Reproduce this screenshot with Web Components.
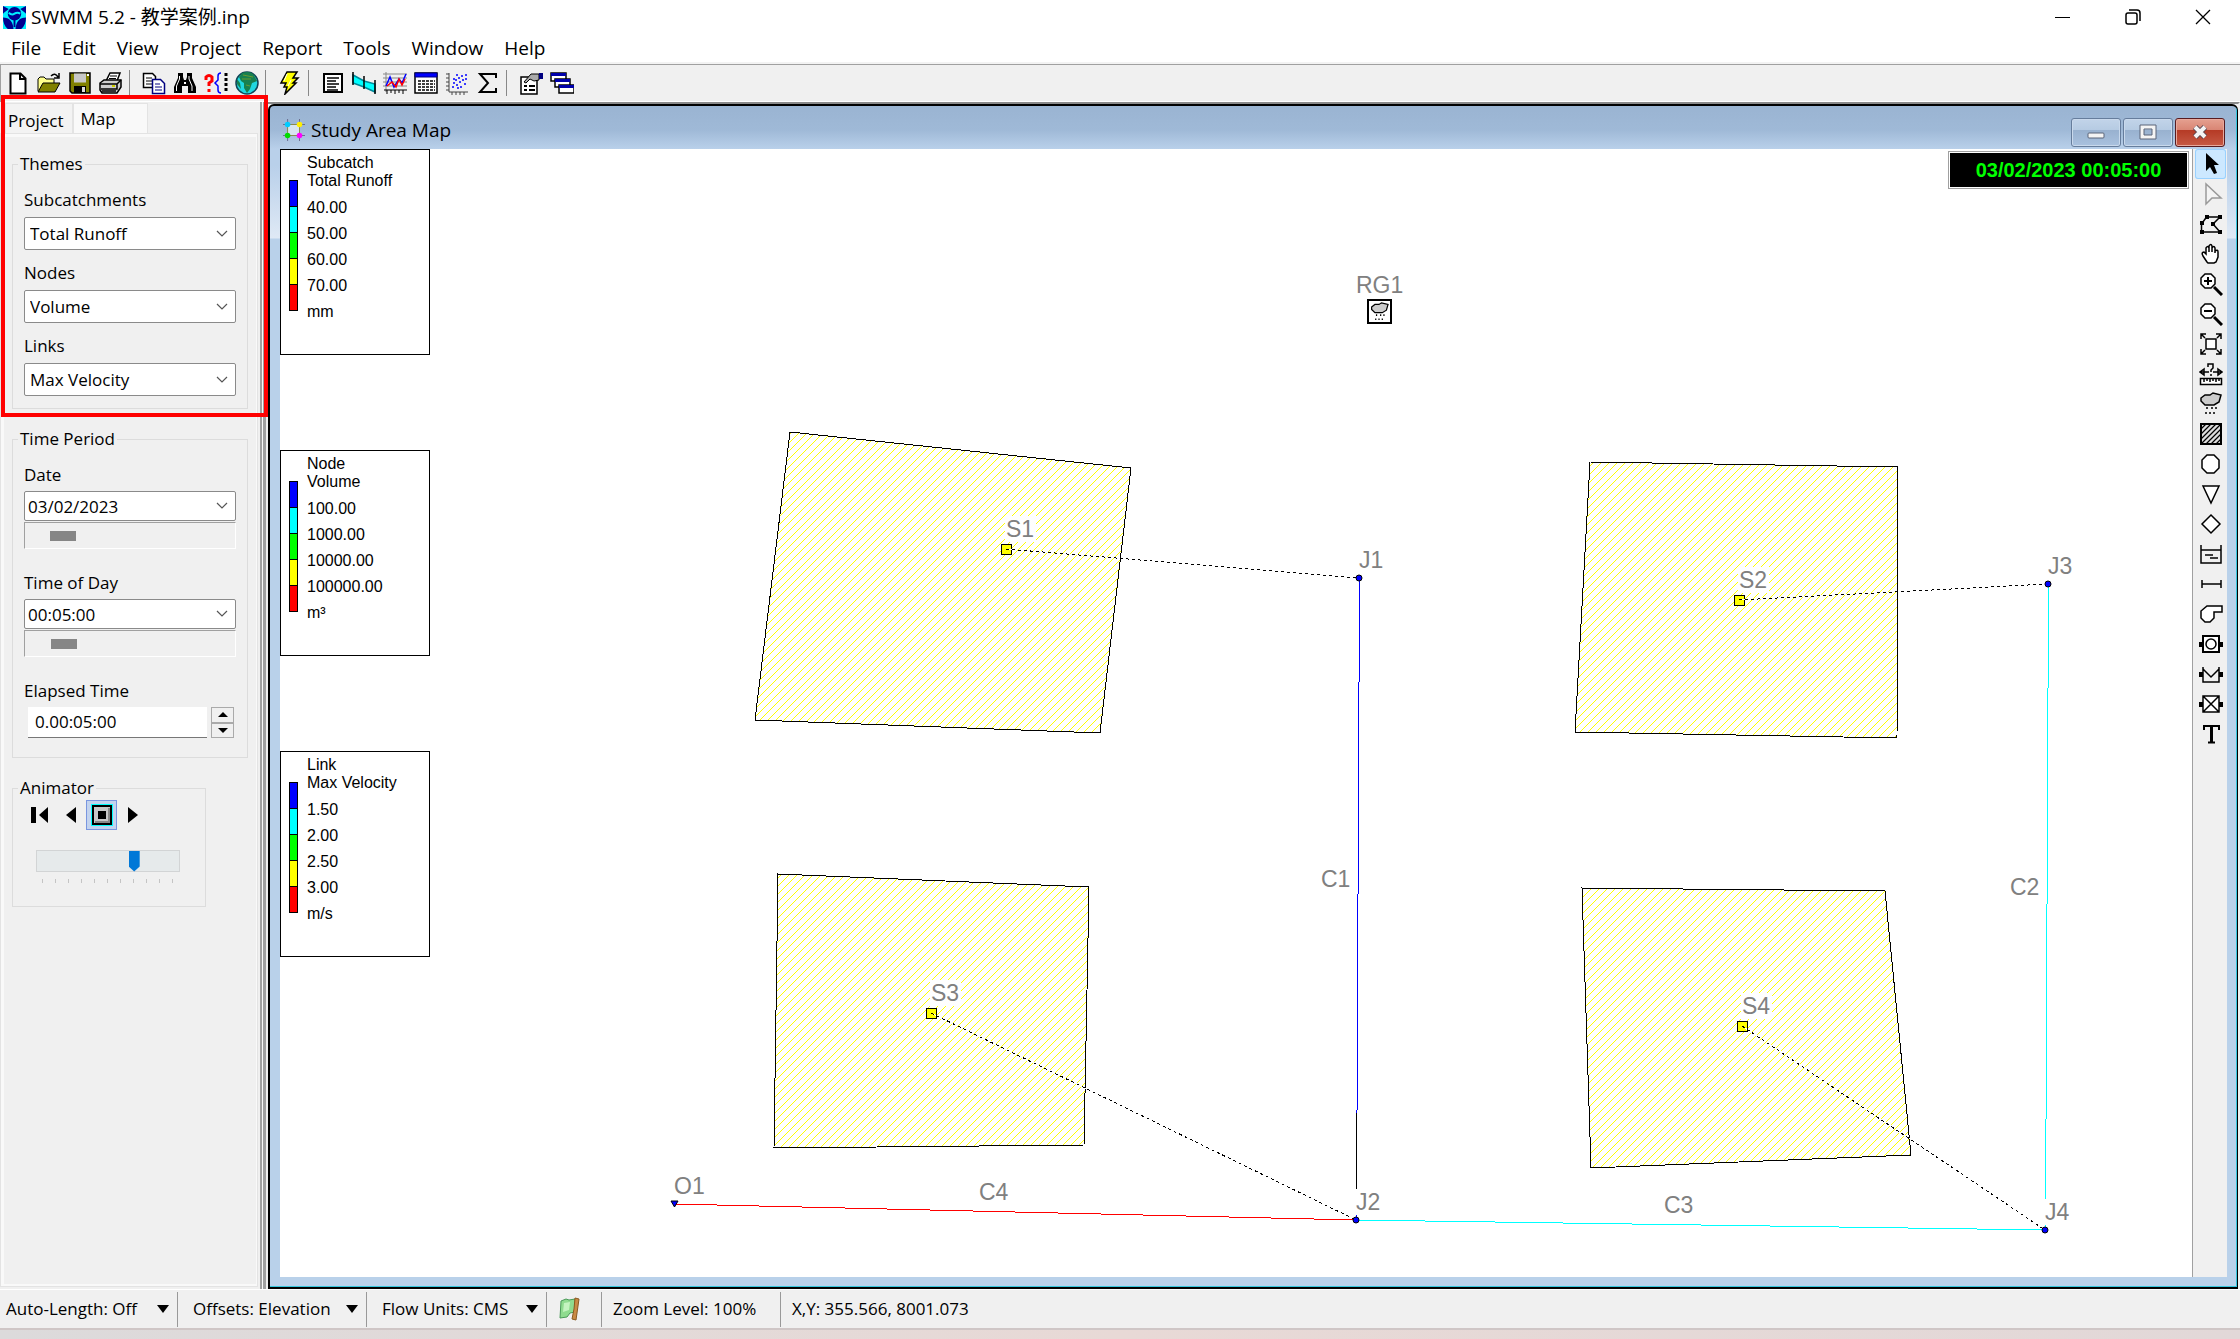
<!DOCTYPE html>
<html lang="en">
<head>
<meta charset="utf-8">
<title>SWMM 5.2 - 教学案例.inp</title>
<style>
  html, body { margin: 0; height: 100%; }
  body { font: 17px/24px "Open Sans", "Noto Sans CJK SC", sans-serif; color: #000; background: #f0f0f0; overflow: hidden; }
</style>
</head>
<body>
<swmm-app></swmm-app>
<script>
const ICONS = {
  new: '<path d="M4.500 2.500h10l5 5v15h-15zM14 3v5h5" fill="#fff" stroke="#000" stroke-width="2"/>',
  open: '<path d="M14 5q4-4 7 1M22 2v5h-5" fill="none" stroke="#000" stroke-width="1.500"/><path d="M1 20V8l2-2h4l2 2h8v4" fill="#ffff8c" stroke="#000"/><path d="M1 21l5-9h17l-5 9z" fill="#808000" stroke="#000"/>',
  save: '<path d="M2 2h20v20H4l-2-2z" fill="#808000" stroke="#000" stroke-width="1.500"/><path d="M6 2.500h12v9H6z" fill="#c8c8c8"/><path d="M6 15h12v7H6z" fill="#000"/><path d="M14 16h3v5h-3z" fill="#ddd"/><path d="M19 3h2v2h-2z" fill="#fff"/>',
  print: '<path d="M7 10L11 2h10l-3 8" fill="#fff" stroke="#000" stroke-width="1.500"/><path d="M11 5h7M10 7.500h7" stroke="#000"/><path d="M1 12l4-3h17v7l-4 6H3l-2-3z" fill="#ccc" stroke="#000" stroke-width="1.500"/><path d="M1 13h17v5H2M18 13l4-4M3 20h14" fill="none" stroke="#000" stroke-width="1.500"/><path d="M13 15h3" stroke="#cc0" stroke-width="2"/>',
  copy: '<path d="M1.500 2.500h9l3 3v11h-12z" fill="#fff" stroke="#000" stroke-width="1.500"/><path d="M4 7h6M4 10h6M4 13h6" stroke="#000"/><path d="M10.500 8.500h8l4 4v10h-12z" fill="#fff" stroke="#000080" stroke-width="1.500"/><path d="M13 13h5M13 16h7M13 19h7" stroke="#000080"/>',
  find: '<path d="M5 2h5v4l1 3h2l1-3V2h5v5l4 9v6h-8v-7h-6v7H1v-6l4-9z" fill="#000"/><path d="M6.500 5v3l-3 7v5M16 5v3l3 7v5" fill="none" stroke="#fff"/><path d="M11 11h2v2h-2z" fill="#fff"/>',
  query: '<path d="M2 9V6q3-3 6 0v4l-3 2v3M5 18v3" fill="none" stroke="#f00" stroke-width="3"/><path d="M17 2q-3 0-3 3v4l-3 3 3 3v4q0 3 3 3" fill="none" stroke="#00f" stroke-width="1.500"/><path d="M22 2v20" stroke="#000" stroke-width="3" stroke-dasharray="3 2"/>',
  globe: '<circle cx="12" cy="12" r="11" fill="#20d8e0" stroke="#145" stroke-width="1.500"/><path d="M7 2q8-3 12 2l3 6-5 2-2 6-3 4-3-5V12L6 10 4 6z" fill="#17804f"/><path d="M2 8l3 4 1 6-4-5z" fill="#17804f"/><path d="M8 4l10 2M7 8h9M11 14l4 1" stroke="#6a9a30"/>',
  bolt: '<path d="M9 1h10l-4 6h5l-5 5h3L7 23l2-7H6l2-4H3z" fill="#ff0" stroke="#000" stroke-width="1.500"/><path d="M9 3l-3 7M13 9l-3 6" stroke="#fff"/>',
  report: '<path d="M3 3h18v18H3z" fill="#fff" stroke="#000" stroke-width="2"/><path d="M6 7h12M6 10h9M6 13h12M6 16h9M6 19h11" stroke="#000" stroke-width="1.500"/>',
  profile: '<path d="M1 4l11 6 11 3v8l-11-5-11-4z" fill="#0ff" stroke="#089" stroke-width="1.500"/><path d="M1 1v13M12 5v13M23 9v14" stroke="#000" stroke-width="1.500"/>',
  graph: '<path d="M3 1v20M0 3h24M0 7h24M0 11h24M0 15h24" stroke="#888"/><path d="M1 19h23M4 19v4M8 19v3M12 19v4M16 19v3M20 19v4" stroke="#000"/><path d="M3 15l4-9 4 10 5-8 3 4 4-9" fill="none" stroke="#00f" stroke-width="1.500"/><path d="M4 15l5-4 4 5 3-8 3 6 3-6" fill="none" stroke="#f00" stroke-width="1.500"/>',
  table: '<path d="M1 2h22v20H1z" fill="#fff" stroke="#000" stroke-width="1.500"/><path d="M1 2h22v4H1z" fill="#00f" stroke="#000080"/><path d="M4 10h17M4 13h17M4 16h17M4 19h17" stroke="#000" stroke-width="1.500" stroke-dasharray="3 1"/>',
  scatter: '<path d="M4 2v19h19M4 3H1M4 7H1M4 11H1M4 15H1M4 19H1M7 21v3M11 21v3M15 21v3M19 21v3" fill="none" stroke="#444"/><path d="M7 16h2M8 12h2M11 14h2M10 9h2M14 11h2M13 7h2M17 9h2M16 5h2M20 4h2M19 13h2M15 16h2M12 17h2M8 8h2M20 8h2M11 4h2" stroke="#00f" stroke-width="1.500"/>',
  sigma: '<path d="M20 7V3H4l8 9-8 9h16v-4" fill="none" stroke="#000" stroke-width="2"/>',
  options: '<path d="M2 6h16v17H2z" fill="#fff" stroke="#000" stroke-width="1.500"/><path d="M5 15h3M10 15h6M5 19h3M10 19h6" stroke="#000" stroke-width="2"/><path d="M5 11l7-8h8v6l-5 1-4-2-4 4z" fill="#aaa" stroke="#000"/><path d="M20 2h4v6h-4z" fill="#000080"/>',
  windows: '<path d="M1 2h15v8H1zM5 8h15v8H5zM9 14h15v8H9z" fill="#fff" stroke="#000" stroke-width="1.500"/><path d="M1 2h15v3H1zM5 8h15v3H5zM9 14h15v3H9z" fill="#00a"/>',
  arrow: '<path d="M7 1v18l4-4 4 7 3-1-3-8h5z" fill="#000"/>',
  vertex: '<path d="M7 2v20l6-6h9z" fill="#f4f4f4" stroke="#999" stroke-width="1.500"/>',
  region: '<path d="M3 20h18M2.500 20v-8l5-7H21l-7 7 7 8" fill="none" stroke="#000" stroke-width="1.500"/><path d="M6 3h4v4H6zM19 3h4v4h-4zM1 9h4v4H1zM12 10h4v4h-4zM1 18h4v4H1zM19 18h4v4h-4z" fill="#000"/>',
  hand: '<path d="M8 20l-4-6q-2-4 1-4l2 2V6q2-3 3 0V4q2-3 3 0v2q2-3 3 0v3q3-2 3 1v5l-2 5-2 1H9zM10 6v4M13 6v4M16 7v4" fill="#fff" stroke="#000" stroke-width="1.500"/>',
  zoomin: '<path d="M6 2h6l4 4v6l-4 4H6l-4-4V6z" fill="#fff" stroke="#000" stroke-width="1.500"/><path d="M9 5v8M5 9h8" stroke="#000" stroke-width="2"/><path d="M15 15l8 8" stroke="#000" stroke-width="3"/>',
  zoomout: '<path d="M6 2h6l4 4v6l-4 4H6l-4-4V6z" fill="#fff" stroke="#000" stroke-width="1.500"/><path d="M5 9h8" stroke="#000" stroke-width="2"/><path d="M15 15l8 8" stroke="#000" stroke-width="3"/>',
  extent: '<path d="M7 7h10v10H7z" fill="#fff" stroke="#000" stroke-width="1.500"/><path d="M2 7V2h5M2 2l4 4M17 2h5v5M22 2l-4 4M2 17v5h5M2 22l4-4M22 17v5h-5M22 22l-4-4" fill="none" stroke="#000" stroke-width="1.500"/>',
  measure: '<path d="M9 5V2h5v4l-2 2v2M12 12v2M2 10h8M14 10h8M5 7l-4 3 4 3zM19 7l4 3-4 3z" fill="none" stroke="#000" stroke-width="1.500"/><path d="M1.500 16.500h21v6h-21zM5 16v4M8 16v3M11 16v4M14 16v3M17 16v4M20 16v3" fill="#fff" stroke="#000" stroke-width="1.500"/>',
  rain: '<path d="M2 6l4-3 5 0 3-2 8 2-2 7-5 3H6L2 9z" fill="#ccc" stroke="#000" stroke-width="1.500"/><path d="M8 15v2M13 15v2M17 15v2M7 20v2M11 20v2M15 20v2" stroke="#000" stroke-width="1.500"/>',
  hatch: '<path d="M2 2h20v20H2z" fill="#ddd" stroke="#000" stroke-width="2"/><path d="M2 7l5-5M2 12L12 2M2 17L17 2M2 22L22 2M7 22L22 7M12 22l10-10M17 22l5-5" stroke="#000" stroke-width="1.200"/>',
  circle: '<path d="M8 3h7l5 5v8l-5 5H8l-5-5V8z" fill="#fff" stroke="#000" stroke-width="1.500"/>',
  triangle: '<path d="M4 4h16l-8 17z" fill="#fff" stroke="#000" stroke-width="1.500"/>',
  diamond: '<path d="M12 3l9 9-9 9-9-9z" fill="#fff" stroke="#000" stroke-width="1.500"/>',
  storage: '<path d="M2 3v18h20V3M2 8h20M6 13h8M11 16h8" fill="none" stroke="#000" stroke-width="1.500"/>',
  conduit: '<path d="M3 8v8M22 8v8M3 12h19" stroke="#000" stroke-width="1.500"/>',
  pump: '<path d="M8 4h15v6h-8v6l-4 4H6l-4-4v-7z" fill="#fff" stroke="#000" stroke-width="1.500"/>',
  orifice: '<path d="M4 4h16v16H4z" fill="#fff" stroke="#000" stroke-width="2"/><circle cx="12" cy="12" r="5" fill="none" stroke="#000" stroke-width="1.500"/><path d="M0 10h4v5H0zM20 10h4v5h-4z"/>',
  weir: '<path d="M4 5v15h16V5M4 7l8 8 8-8" fill="none" stroke="#000" stroke-width="1.500"/><path d="M0 10h4v5H0zM20 10h4v5h-4z"/>',
  outlet: '<path d="M4 4h16v16H4zM4 4l16 16M20 4L4 20" fill="#fff" stroke="#000" stroke-width="1.500"/><path d="M0 10h4v5H0zM20 10h4v5h-4z"/>',
  label: '<path d="M5 8V4h15v4M12.500 4v16M9 20.500h7" fill="none" stroke="#000" stroke-width="2"/><path d="M11 4h3v16h-3z"/>',
  study: '<path d="M5 0v24M18 0v24M0 6h24M0 18h24" stroke="#668" stroke-width="1"/><path d="M5 6h13v12H5z" fill="#d8e4f0" stroke="#884"/><circle cx="5" cy="6" r="3" fill="#0cf"/><circle cx="18" cy="6" r="3" fill="#fe0"/><circle cx="5" cy="18" r="3" fill="#0d0"/><circle cx="18" cy="18" r="3" fill="#f0f"/>',
  logo: '<path d="M0 0h24v24H0z" fill="#0ef"/><path d="M0 0l6 3-5 4-1 1zM24 0l-6 3 5 4 1 1zM0 12q10 0 11 12H5Q0 20 0 12zM24 12q-10 0-11 12h6q5-4 5-12z" fill="#000090"/><circle cx="12" cy="8" r="7" fill="#000090"/><path d="M6 7q3 3 6 1t6 0" stroke="#0ef" stroke-width="2" fill="none"/><path d="M12 14v8" stroke="#000090" stroke-width="2"/>',
  flag: '<path d="M3 4l5-2 3 1 6-1v13l-5 1-3 4-7 1z" fill="#8fdc8f" stroke="#4a9a58"/><path d="M6 6l6-1-1 8-6 2z" fill="#c4f4c0"/><path d="M17 1l4 1-3 21-4-1 2-10z" fill="#c98a45" stroke="#8a5a20"/>',
  first: '<path d="M3 4h5v16H3zM20 4v16l-9-8z" fill="#000"/>',
  back: '<path d="M17 4v16l-10-8z" fill="#000"/>',
  stop: '<path d="M1 1h22v22H1z" fill="#0ff"/><path d="M3 3h18v18H3z" fill="#c8c8c8" stroke="#000" stroke-width="2"/><path d="M5 19h14V5" fill="none" stroke="#888" stroke-width="2"/><path d="M8 8h8v8H8z"/>',
  play: '<path d="M7 4v16l10-8z" fill="#000"/>'
};
const icon = (n, s = 24) => `<svg width="${s}" height="${s}" viewBox="0 0 24 24" aria-hidden="true">${ICONS[n]}</svg>`;
const RESET = `*{box-sizing:border-box} svg{display:block;flex:none} button{font:inherit;color:inherit;border:0;padding:0;margin:0;background:none;display:grid;place-items:center}`;

function define(name, css, html) {
  customElements.define(name, class extends HTMLElement {
    constructor() {
      super();
      this.attachShadow({ mode: 'open' });
    }
    connectedCallback() {
      const t = document.createElement('template');
      t.innerHTML = `<style>${RESET}${css}</style>${typeof html === 'function' ? html(this) : html}`;
      this.shadowRoot.replaceChildren(t.content.cloneNode(true));
    }
  });
}

define('title-bar', `
  :host{display:flex;align-items:center;height:34px;background:#fff;padding:0 2px 0 3px;gap:5px;font-size:19px}
  span{flex:1} button{width:70px;height:34px} nav{display:flex}`,
  `${icon('logo', 23)}<span>SWMM 5.2 - 教学案例.inp</span>
  <nav>
    <button aria-label="Minimize"><svg width="16" height="16"><path d="M0 8.500h15" stroke="#000"/></svg></button>
    <button aria-label="Restore"><svg width="16" height="16" fill="none" stroke="#000" stroke-width="1.500"><rect x="1" y="4" width="11" height="11" rx="2"/><path d="M4 1h8q3 0 3 3v8"/></svg></button>
    <button aria-label="Close"><svg width="16" height="16"><path d="M1 1l14 14M15 1L1 15" stroke="#000" stroke-width="1.300"/></svg></button>
  </nav>`);

define('menu-bar', `
  :host{display:flex;height:28px;background:#fff;padding:0 11px;gap:21px;align-items:center;font-size:19px} button{height:24px}`,
  ['File', 'Edit', 'View', 'Project', 'Report', 'Tools', 'Window', 'Help'].map(t => `<button>${t}</button>`).join(''));

define('tool-bar', `
  :host{display:flex;height:40px;border-top:2px solid #f3f3f3;background:#f0f0f0;box-shadow:inset 0 1px #a0a0a0,inset 1px 0 #a0a0a0,inset 0 -1px #fff;padding:0 2px;align-items:center}
  button{width:31px;height:32px} i{width:12px;height:26px} i::before{content:"";display:block;width:1px;height:26px;margin-left:3px;background:#888}`,
  'new open save print | copy find query globe | bolt | report profile graph table scatter sigma | options windows'
    .split(' ').map(n => n === '|' ? '<i></i>' : `<button aria-label="${n}">${icon(n)}</button>`).join(''));

define('drop-field', `
  :host{display:grid;grid-template-columns:minmax(0,1fr);--h:33px;--gap:5px;--pad:0 30px 0 5px}
  :host([compact]){--h:30px;--gap:4px;--pad:2px 30px 0 3px}
  label{height:24px;margin-bottom:var(--gap)}
  div{display:grid;align-items:center;height:var(--h)}
  select{grid-area:1/1;appearance:none;font:inherit;color:#000;width:100%;height:100%;background:#fff;border:1px solid #8a8a8a;border-radius:2px;padding:var(--pad);margin:0}
  svg{grid-area:1/1;justify-self:end;margin-right:8px;pointer-events:none}
  input{appearance:none;display:block;width:100%;height:27px;margin:1px 0 0;background:#f0f0f0;border:1px solid;border-color:#a0a0a0 #fff #fff #a0a0a0}
  input::-webkit-slider-thumb{appearance:none;width:26px;height:10px;background:#868686}`,
  el => `<label for="s">${el.getAttribute('label')}</label>
  <div><select id="s"><option>${el.getAttribute('value')}</option></select>
  <svg width="12" height="8"><path d="M1 1l5 5 5-5" fill="none" stroke="#555" stroke-width="1.200"/></svg></div>
  ${el.hasAttribute('scroll') ? `<input type="range" max="1000" value="${el.getAttribute('scroll')}" aria-label="${el.getAttribute('label')} scroll">` : ''}`);

define('group-box', `
  :host{display:block}
  fieldset{margin:0;border:1px solid #dcdcdc;padding:0;min-width:0}
  legend{padding:0 2px;margin:0 0 0 5px;height:24px}
  div{padding:var(--group-pad,12px 11px)}`,
  el => `<fieldset><legend>${el.getAttribute('label')}</legend><div><slot></slot></div></fieldset>`);

define('elapsed-field', `
  :host{display:block;min-width:0} label{display:block;height:24px;margin-bottom:4px}
  div{display:flex;gap:4px;padding:0 2px 0 4px;height:31px}
  input{flex:1;min-width:0;font:inherit;border:0;border-bottom:1px solid #777;background:#fff;padding:0 7px}
  span{display:grid;width:23px;grid-template-rows:1fr 1fr} button{border:1px solid #aaa;background:#f0f0f0}`,
  `<label for="e">Elapsed Time</label><div><input id="e" value="0.00:05:00"><span>
  <button aria-label="Increase"><svg width="10" height="5"><path d="M0 5l5-5 5 5z"/></svg></button>
  <button aria-label="Decrease"><svg width="10" height="5"><path d="M0 0l5 5 5-5z"/></svg></button></span></div>`);

define('anim-controls', `
  :host{display:block}
  nav{display:flex;height:30px;align-items:center;padding-left:11px} button{width:31px;height:30px}
  button[aria-pressed]{background:#c3d3ee;border:1px solid #7a96df}
  input{appearance:none;display:block;width:144px;height:22px;margin:20px 0 0 23px;background:#e6eaeb;border:1px solid #d2d4d5}
  input::-webkit-slider-thumb{appearance:none;width:11px;height:21px;background:#0078d7;clip-path:polygon(0 0,100% 0,100% 76%,50% 100%,0 76%)}
  svg.t{margin:7px 0 0 29px}`,
  `<nav><button aria-label="First">${icon('first')}</button><button aria-label="Back">${icon('back')}</button><button aria-label="Stop" aria-pressed="true">${icon('stop')}</button><button aria-label="Play">${icon('play')}</button></nav>
  <input type="range" max="10" value="7" aria-label="Animation speed">
  <svg class="t" width="134" height="5"><path d="${[...Array(11)].map((_, i) => `M${i * 13 + .5} 0v4`).join('')}" stroke="#c4c4c4"/></svg>`);

define('side-panel', `
  :host{display:block;width:260px;flex:none;background:#f0f0f0;padding:1px 3px 3px 1px}
  .tabs{display:flex;height:31px;padding-left:4px;align-items:flex-end}
  .tabs button{height:31px;border:1px solid #e3e3e3;border-bottom:0;background:#f3f3f3;padding:3px 9px 0 2px}
  .tabs button+button{background:#f9f9f9;width:75px;padding:0 0 0 6px;justify-content:start}
  .page{height:calc(100% - 31px);border:solid #f9f9f9;border-width:3px 1px 2px 3px;outline:1px solid #e3e3e3;padding:15px 8px 0;display:flex;flex-direction:column;gap:18px}
  .fields{display:grid;grid-template-columns:minmax(0,1fr);gap:11px} .fields.time{gap:22px}
  group-box.t{--group-pad:12px 11px 19px} group-box.a{--group-pad:0 0 22px;width:194px}
  .mark{position:absolute;left:1px;top:-7px;width:267px;height:322px;border:4px solid #f00;pointer-events:none;z-index:2}`,
  `<div class="tabs" role="tablist"><button role="tab">Project</button><button role="tab" aria-selected="true">Map</button></div>
  <div class="page">
    <group-box label="Themes"><div class="fields">
      <drop-field label="Subcatchments" value="Total Runoff"></drop-field>
      <drop-field label="Nodes" value="Volume"></drop-field>
      <drop-field label="Links" value="Max Velocity"></drop-field></div></group-box>
    <group-box class="t" label="Time Period"><div class="fields time">
      <drop-field compact label="Date" value="03/02/2023" scroll="134"></drop-field>
      <drop-field compact label="Time of Day" value="00:05:00" scroll="139"></drop-field>
      <elapsed-field></elapsed-field></div></group-box>
    <group-box class="a" label="Animator"><anim-controls></anim-controls></group-box>
  </div><div class="mark"></div>`);

define('map-legend', `
  :host{display:block;width:150px;height:206px;border:1px solid #000;background:#fff;font:16px/18px "Liberation Sans",Arial,sans-serif;padding:4px 0 0 8px}
  p{margin:0 0 0 18px} .row{display:flex;gap:9px}
  ul{list-style:none;margin:0;padding:5px 0 0} li{height:26px;line-height:26px}
  .bar{width:9px;height:131px;margin-top:-10px;border:1px solid #000;display:grid;grid-template-rows:repeat(5,1fr);gap:1px;background:#000}`,
  el => `<p>${el.getAttribute('kind')}</p><p>${el.getAttribute('theme')}</p>
  <div class="row"><div class="bar">${['#00f', '#0ff', '#0f0', '#ff0', '#f00'].map(c => `<b style="background:${c}"></b>`).join('')}</div>
  <ul>${el.getAttribute('values').split(' ').map(v => `<li>${v}</li>`).join('')}</ul></div>`);

const AREAS = ['790,432 1131,468 1100,733 755,720', '1590,462 1898,467 1897,738 1575,732', '778,874 1089,887 1084,1145 774,1148', '1582,888 1885,891 1911,1155 1591,1168'];
const CENTROIDS = [[1006, 549, 1359, 578], [1739, 600, 2048, 584], [931, 1013, 1356, 1220], [1742, 1026, 2045, 1230]];
const LABELS = [['RG1', 1356, 293], ['S1', 1006, 537], ['S2', 1739, 588], ['S3', 931, 1001], ['S4', 1742, 1014], ['J1', 1359, 568], ['J2', 1356, 1210], ['J3', 2048, 574], ['J4', 2045, 1220], ['O1', 674, 1194], ['C1', 1321, 887], ['C2', 2010, 895], ['C3', 1664, 1213], ['C4', 979, 1200]];
define('study-map', `
  :host{display:flex;flex:1;min-width:0;background:#fff;position:relative;justify-content:space-between;align-items:flex-start}
  .net{position:absolute;inset:0;width:100%;height:100%} .net text{font:23px "Liberation Sans",Arial,sans-serif;fill:#808080}
  .legends{display:flex;flex-direction:column;gap:95px;position:relative}
  time{position:relative;margin:2px 3px 0 0;border:1px solid #a0a0a0;box-shadow:inset 0 0 0 1px #fff;padding:1px;width:241px}
  time span{display:block;background:#000;color:#0f0;font:bold 20px/34px "Liberation Sans",Arial,sans-serif;text-align:center}`,
  `<svg class="net" shape-rendering="crispEdges" role="img" aria-label="Drainage network">
    <defs><pattern id="h" width="8" height="8" patternUnits="userSpaceOnUse"><rect width="8" height="8" fill="#fff"/>${[0, 1, 2, 3, 4, 5, 6, 7].map(i => `<rect x="${i}" y="${7 - i}" width="1" height="1" fill="#ff0"/>`).join('')}</pattern></defs>
    <g transform="translate(-280 -149)">
    ${AREAS.map(p => `<polygon points="${p}" fill="url(#h)" stroke="#000"/>`).join('')}
    ${CENTROIDS.map(([x, y, a, b]) => `<rect x="${x - 5}" y="${y - 5}" width="10" height="10" fill="#ff0" stroke="#000"/><path d="M${x} ${y}L${a} ${b}" stroke="#fff"/><path d="M${x} ${y}L${a} ${b}" stroke="#000" stroke-dasharray="3 3"/>`).join('')}
    <path d="M1359.500 578L1356.500 1220" stroke="#00f"/><path d="M1356.500 1113V1190" stroke="#000"/><path d="M2048.500 584L2045.500 1230M1356 1220L2045 1230" stroke="#0ff"/><path d="M674 1204L1356 1220" stroke="#f00"/>
    ${LABELS.map(([t, x, y]) => `<rect x="${x - 1}" y="${y - 21}" width="${t.length * 15 + 1}" height="26" fill="#fff"/><text x="${x}" y="${y}">${t}</text>`).join('')}
    ${[[1359, 578], [2048, 584], [1356, 1220], [2045, 1230]].map(([x, y]) => `<circle cx="${x}" cy="${y}" r="3" fill="#00f" stroke="#000" shape-rendering="auto"/>`).join('')}
    <path d="M671 1201h7l-3.500 6z" fill="#00f" stroke="#000" shape-rendering="auto"/>
    <rect x="1368" y="300" width="23" height="23" fill="#fff" stroke="#000" stroke-width="1.500"/>
    <g transform="translate(1370 302) scale(.82)" shape-rendering="auto">${ICONS.rain}</g>
    </g></svg>
  <div class="legends">
    <map-legend kind="Subcatch" theme="Total Runoff" values="40.00 50.00 60.00 70.00 mm"></map-legend>
    <map-legend kind="Node" theme="Volume" values="100.00 1000.00 10000.00 100000.00 m³"></map-legend>
    <map-legend kind="Link" theme="Max Velocity" values="1.50 2.00 2.50 3.00 m/s"></map-legend>
  </div><time><span>03/02/2023 00:05:00</span></time>`);

define('tool-palette', `
  :host{display:flex;flex-direction:column;width:35px;flex:none;background:#f0f0f0;border-left:1px solid #a0a0a0;padding-left:2px}
  button{width:31px;height:30px} button[aria-pressed]{background:#cce8ff;box-shadow:inset 0 0 0 1px #99d1ff;border-radius:3px}`,
  'arrow vertex region hand zoomin zoomout extent measure rain hatch circle triangle diamond storage conduit pump orifice weir outlet label'
    .split(' ').map((n, i) => `<button aria-label="${n}"${i ? '' : ' aria-pressed="true"'}>${icon(n)}</button>`).join(''));

define('map-window', `
  :host{display:flex;flex:1;min-width:0;border-top:2px solid #8a8a8a;border-right:2px solid #f0f0f0}
  section{flex:1;min-width:0;display:flex;flex-direction:column;border:solid #000;border-width:2px 1px 2px 2px;border-radius:6px 6px 0 0;
    box-shadow:inset -1px -1px #35c6dd;padding:0 10px 10px;
    background:linear-gradient(#9ab4d2,#9fb9d7 24px,#b9d0ea 43px,#b9d0ea 60px,#dfe9f5 132px,#b9d1ea 133px)}
  header{display:flex;align-items:center;height:43px;gap:6px;font-size:19px;margin-right:2px;padding:5px 0 0 3px} header span{flex:1}
  .body{flex:1;display:flex;min-height:0}
  nav{display:flex;gap:2px;padding-top:4px} button{width:50px;height:29px;border:1px solid #667d9c;border-radius:3px;background:linear-gradient(#c2d4e9,#b6cbe3 40%,#98b1cf 41%,#a9c1de);box-shadow:inset 0 0 0 1px #c9d9ec}
  button:last-child{border-color:#581c20;background:linear-gradient(#e5a090,#d98574 40%,#b53a25 41%,#c65a45);box-shadow:inset 0 0 0 1px #e8a99c}`,
  `<section><header>${icon('study', 22)}<span>Study Area Map</span><nav>
  <button aria-label="Minimize"><svg width="18" height="16"><rect x="1" y="9" width="16" height="5" rx="1" fill="#f4f4f4" stroke="#5a6478"/></svg></button>
  <button aria-label="Maximize"><svg width="18" height="16" fill="#f4f4f4" stroke="#5a6478"><path d="M1 1h16v14H1zM5 5v6h8V5z" fill-rule="evenodd"/></svg></button>
  <button aria-label="Close"><svg width="18" height="16"><path d="M4 3l10 10M14 3L4 13" stroke="#5a4650" stroke-width="6"/><path d="M4 3l10 10M14 3L4 13" stroke="#f4f4f4" stroke-width="4"/></svg></button>
  </nav></header><div class="body"><study-map></study-map><tool-palette></tool-palette></div></section>`);

define('status-bar', `
  :host{display:flex;height:39px;background:#f0f0f0;padding-left:6px;align-items:center;border-top:1px solid #fff}
  button,span{display:flex;align-items:center;justify-content:space-between;height:35px;border-right:1px solid #999;padding-right:8px;margin-right:15px}
  .a{width:172px}.b{width:174px}.c{width:165px;margin-right:11px}.f{width:44px;margin-right:11px;padding:0}.z{width:168px;margin-right:11px}.x{border:0}`,
  `${[['a', 'Auto-Length: Off'], ['b', 'Offsets: Elevation'], ['c', 'Flow Units: CMS']].map(([c, t]) => `<button class="${c}">${t}<svg width="12" height="8"><path d="M0 0h12l-6 8z"/></svg></button>`).join('')}
  <span class="f">${icon('flag')}</span><span class="z">Zoom Level: 100%</span><span class="x">X,Y: 355.566, 8001.073</span>`);

define('swmm-app', `
  :host{display:flex;flex-direction:column;height:100vh}
  main{flex:1;display:flex;min-height:0;position:relative}
  .split{width:8px;flex:none;background:linear-gradient(90deg,#a0a0a0 2px,#f8f8f8 2px 3px,#a0a0a0 3px 6px,#f0f0f0 6px)}
  footer{height:11px;border-top:2px solid #cfc6c6;background:linear-gradient(90deg,#dcdadb,#e8d9d6 50%,#e2d8d8)}`,
  `<title-bar></title-bar><menu-bar></menu-bar><tool-bar></tool-bar>
  <main><side-panel></side-panel><div class="split"></div><map-window></map-window></main>
  <status-bar></status-bar><footer></footer>`);
</script>
</body>
</html>
